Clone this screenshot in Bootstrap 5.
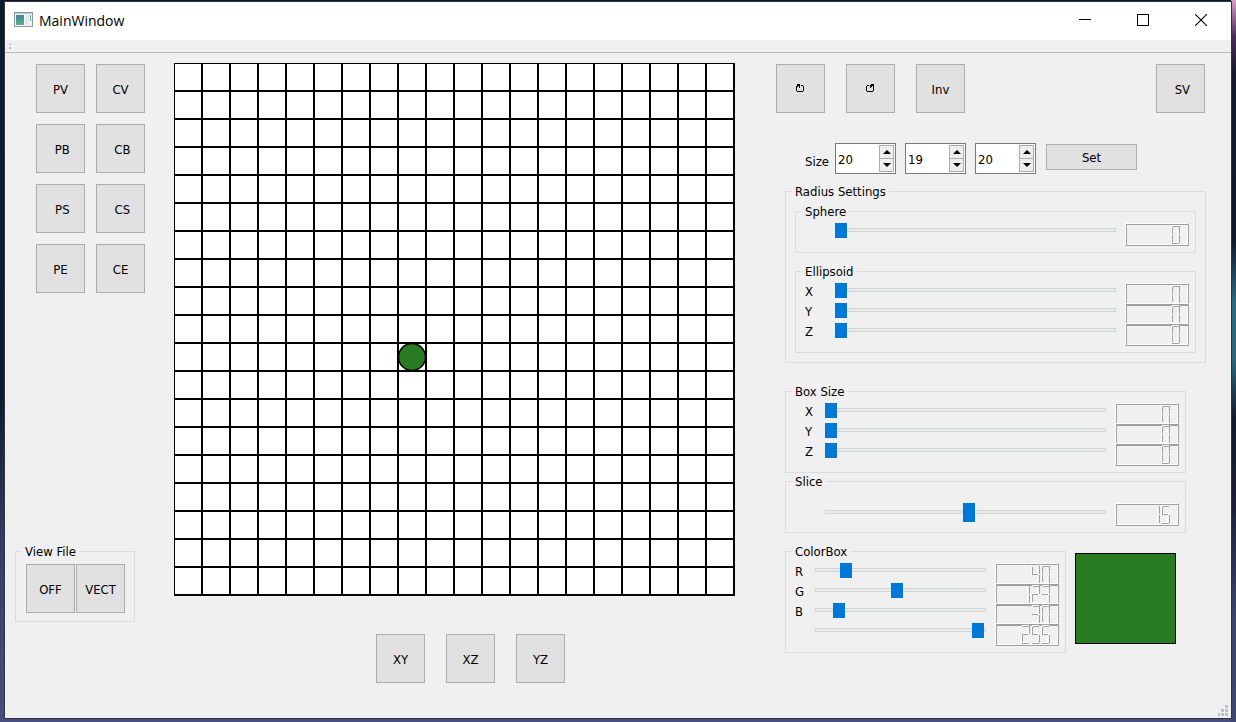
<!DOCTYPE html>
<html lang="en">
<head>
<meta charset="utf-8">
<meta name="viewport" content="width=device-width, initial-scale=1">
<title>MainWindow</title>
<link href="https://cdn.jsdelivr.net/npm/bootstrap@5.3.0/dist/css/bootstrap.min.css" rel="stylesheet">
<style>
:root { --face:#f0f0f0; --edge:#a0a0a0; --accent:#0078d7; --pick:#287b21; }
body {
  font: 13px/17px "DejaVu Sans Condensed", "DejaVu Sans", sans-serif;
  color: #000;
  min-height: 100vh;
  padding: 2px 5px 4px;
  background:
    linear-gradient(#d9a0c8, #4a2f55 5%, #161a2c 10%, #10172a 33%, #2c6a80 42%, #2b6578 50%, #15192d 58%, #1c1f35 70%, #3c436c 85%, #3f4670) right / 5px 100% no-repeat,
    linear-gradient(#0b1a2c, #0e1c30 55%, #333c66 75%, #474f80);
}
.app { background: var(--face); outline: 1px solid #30343f; }
.titlebar { background: #fff; height: 38px; padding-left: 9px; font: 14px/22px "Open Sans", "Noto Sans", sans-serif; }
.appicon { margin-top: 10px; }
.wbtns { margin-right: 1px; }
.wbtn { width: 58px; height: 36px; border: 0; background: none; padding: 0; display: flex; align-items: center; justify-content: center; }
.toolstrip { height: 13px; border-bottom: 1px solid #b9b9b9; padding: 3px 4px; }
.toolstrip svg, .board, .wbtn svg { display: block; }
.workspace { padding: 10px 25px 35px 10px; }
.tools { width: 130px; margin-right: 29px; padding: 1px 0 61px; }
.toolgrid { display: grid; grid-template-columns: 49px 49px; gap: 11px; margin-left: 21px; }
.push { background: #e1e1e1; border: 1px solid #adadad; border-radius: 0; color: #000; font: inherit; padding: 1px 0 0; width: 49px; height: 49px; }
.push:hover { background: #e5f1fb; border-color: var(--accent); }
.push svg { display: block; margin: 0 auto; }
.push-wide { width: 91px; height: 26px; margin: 1px 0 0 1px; padding: 0; }
.files { gap: 1px; }
.views { gap: 21px; margin-top: 38px; padding-left: 32px; }
.panel { margin-left: 41px; padding-top: 1px; }
.actions { gap: 21px; margin-right: 1px; }
.sizes { gap: 9px; margin: 30px 0 9px 29px; }
.sizes > label { width: 21px; padding-top: 10px; white-space: nowrap; }
.spin { width: 61px; height: 31px; border: 1px solid #7a7a7a; background: #fff; padding: 1px; }
.spin input { width: 42px; border: 0; padding: 2px 0 0 1px; outline: 0; appearance: textfield; -moz-appearance: textfield; background: none; }
.spin input::-webkit-inner-spin-button { appearance: none; }
.spin button { flex: 1; width: 15px; padding: 0; border: 1px solid #acacac; background: #eee; display: flex; align-items: center; justify-content: center; }
.spin button + button { border-top: 0; }
.spin svg { display: block; }

fieldset.frame { border: 1px solid #dcdcdc; padding: 3px 6px 6px 9px; }
.frame > legend { float: none; width: auto; font: inherit; margin: 0 0 0 -3px; padding: 0 3px; }
fieldset.frame-outer { padding: 3px 9px 9px; }
fieldset.frame-files { padding: 4px 8px 8px 10px; width: 120px; }
.frame-files > legend { margin-left: -4px; }
.frame-outer .frame + .frame { margin-top: 10px; }
.panes { margin-left: 9px; }
.stack { margin: 20px 20px 0 0; }
.colorrow { margin-top: 10px; }

.dial { display: grid; grid-template-columns: 30px 1fr 64px; height: 23px; margin-bottom: -3px; }
.dial:last-child { margin-bottom: 0; }
.dial-short { grid-template-columns: 20px 1fr 64px; }
.indent { padding-left: 10px; }
.tall-top { padding-top: 10px; }
.dial > label { line-height: 18px; }
.dial input { appearance: none; -webkit-appearance: none; background: none; width: calc(100% - 9px); height: 14px; margin: 0; padding: 0; display: block; }
.dial input::-webkit-slider-runnable-track { height: 4px; background: #e7eaea; border: 1px solid #d6d6d6; }
.dial input::-webkit-slider-thumb { -webkit-appearance: none; width: 12px; height: 15px; margin: -6px 0 0 -1px; background: var(--accent); border: 0; border-radius: 0; }
.dial input.deep { height: 18px; }
.dial input.deep::-webkit-slider-thumb { height: 19px; margin-top: -8px; }
.lcd { display: block; height: 23px; background: var(--face); border: 1px solid; border-color: #fff var(--edge) var(--edge) #fff; box-shadow: inset 1px 1px 0 var(--edge), inset -1px -1px 0 #fff; position: relative; }
.dial + .dial .lcd { box-shadow: inset 1px 2px 0 var(--edge), inset -1px -1px 0 #fff; }
.lcd svg { display: block; width: 62px; height: 21px; }
.swatch { width: 101px; height: 91px; background: var(--pick); border: 1px solid #000; margin: 10px 10px 0 9px; }
.grip { position: absolute; right: 3px; bottom: 2px; }
</style>
</head>
<body class="d-flex">
<div class="app position-relative flex-grow-1 d-flex flex-column">
  <header class="titlebar d-flex align-items-start">
    <svg class="appicon me-1" width="21" height="16" viewBox="0 0 21 16"><rect x=".5" y=".5" width="18" height="14" fill="#f4f6f8" stroke="#8b98a5"/><rect x="1" y="1" width="17" height="1" fill="#b9c4cf"/><defs><linearGradient id="ig" x2="0" y2="1"><stop stop-color="#4a7fa0"/><stop offset="1" stop-color="#5ab183"/></linearGradient></defs><rect x="2" y="3" width="8" height="10" fill="url(#ig)"/><rect x="11" y="3" width="4" height="10" fill="#e3e7ec"/><rect x="16" y="3" width="1" height="6" fill="#55ae83"/></svg>
    <span class="pt-2">MainWindow</span>
    <div class="wbtns ms-auto d-flex">
      <button class="wbtn" aria-label="Minimize"><svg width="12" height="12"><path d="M0 5.500h12" stroke="#000"/></svg></button>
      <button class="wbtn" aria-label="Maximize"><svg width="12" height="12"><rect x=".5" y=".5" width="11" height="11" fill="none" stroke="#000"/></svg></button>
      <button class="wbtn" aria-label="Close"><svg width="12" height="12"><path d="M0 0 12 12M12 0 0 12" stroke="#000" stroke-width="1.100"/></svg></button>
    </div>
  </header>
  <div class="toolstrip"><svg width="3" height="6" fill="#bdbdbd"><path d="M0 1h2v1H0zM0 4h2v2H0zM1 0h1v2H1z"/></svg></div>

  <main class="workspace d-flex flex-grow-1">
    <section class="tools d-flex flex-column justify-content-between flex-shrink-0">
      <div class="toolgrid">
        <button class="push">PV</button><button class="push">CV</button>
        <button class="push">&nbsp;PB</button><button class="push">&nbsp;CB</button>
        <button class="push">&nbsp;PS</button><button class="push">&nbsp;CS</button>
        <button class="push">PE</button><button class="push">CE</button>
      </div>
      <fieldset class="frame frame-files">
        <legend>View File</legend>
        <div class="files d-flex"><button class="push">OFF</button><button class="push">VECT</button></div>
      </fieldset>
    </section>

    <section class="flex-shrink-0">
      <svg class="board" width="561" height="533" role="img" aria-label="Slice grid">
        <defs><pattern id="cell" width="28" height="28" patternUnits="userSpaceOnUse"><path d="M0 0h28v28H0z" fill="#fff"/><path d="M0 0h28v1H1v27H0zM27 1v26H1v1h27V1z" fill="#000"/></pattern></defs>
        <rect width="561" height="533" fill="url(#cell)"/>
        <circle cx="238" cy="294" r="13.500" fill="#287b21" stroke="#000" stroke-width="1.500"/>
      </svg>
      <div class="views d-flex justify-content-center">
        <button class="push">XY</button><button class="push">XZ</button><button class="push">YZ</button>
      </div>
    </section>

    <section class="panel flex-grow-1">
      <div class="actions d-flex">
        <button class="push" aria-label="Rotate clockwise"><svg width="9" height="10" viewBox="0 0 9 10" shape-rendering="crispEdges"><path d="M1 0h3v4H3V2H2v1H1v4H0V2h1zM5 1h2v1h1v5H7V2H5zM1 7h6v1H1z"/></svg></button>
        <button class="push" aria-label="Rotate counterclockwise"><svg width="9" height="10" viewBox="0 0 9 10" shape-rendering="crispEdges"><path d="M5 0h3v7H7V2H6v1H5v1H4V1h1zM1 1h2v1H1v5H0V2h1zM1 7h6v1H1z"/></svg></button>
        <button class="push">Inv</button>
        <button class="push ms-auto">&nbsp;SV</button>
      </div>

      <div class="sizes d-flex align-items-start">
        <label for="sx">Size</label>
        <div class="spin d-flex"><input id="sx" type="number" value="20"><div class="d-flex flex-column"><button aria-label="Increase"><svg width="8" height="4"><path d="M0 4 4 0l4 4z"/></svg></button><button aria-label="Decrease"><svg width="8" height="4"><path d="M0 0h8L4 4z"/></svg></button></div></div>
        <div class="spin d-flex"><input aria-label="Size Y" type="number" value="19"><div class="d-flex flex-column"><button aria-label="Increase"><svg width="8" height="4"><path d="M0 4 4 0l4 4z"/></svg></button><button aria-label="Decrease"><svg width="8" height="4"><path d="M0 0h8L4 4z"/></svg></button></div></div>
        <div class="spin d-flex"><input aria-label="Size Z" type="number" value="20"><div class="d-flex flex-column"><button aria-label="Increase"><svg width="8" height="4"><path d="M0 4 4 0l4 4z"/></svg></button><button aria-label="Decrease"><svg width="8" height="4"><path d="M0 0h8L4 4z"/></svg></button></div></div>
        <button class="push push-wide">Set</button>
      </div>

      <div class="panes">
        <fieldset class="frame frame-outer">
          <legend>Radius Settings</legend>
          <fieldset class="frame">
            <legend>Sphere</legend>
            <div class="dial"><span></span><input type="range" aria-label="Sphere radius" max="99" value="0"><output class="lcd"></output></div>
          </fieldset>
          <fieldset class="frame">
            <legend>Ellipsoid</legend>
            <div class="dial"><label for="ex">X</label><input id="ex" type="range" max="99" value="0"><output class="lcd"></output></div>
            <div class="dial"><label for="ey">Y</label><input id="ey" type="range" max="99" value="0"><output class="lcd"></output></div>
            <div class="dial"><label for="ez">Z</label><input id="ez" type="range" max="99" value="0"><output class="lcd"></output></div>
          </fieldset>
        </fieldset>

        <div class="stack">
          <fieldset class="frame">
            <legend>Box Size</legend>
            <div class="indent">
              <div class="dial dial-short"><label for="bx">X</label><input id="bx" type="range" max="99" value="0"><output class="lcd"></output></div>
              <div class="dial dial-short"><label for="by">Y</label><input id="by" type="range" max="99" value="0"><output class="lcd"></output></div>
              <div class="dial dial-short"><label for="bz">Z</label><input id="bz" type="range" max="99" value="0"><output class="lcd"></output></div>
            </div>
          </fieldset>
          <fieldset class="frame">
            <legend>Slice</legend>
            <div class="indent tall-top">
              <div class="dial dial-short"><span></span><input class="deep" type="range" aria-label="Slice" max="29" value="15"><output class="lcd"></output></div>
            </div>
          </fieldset>
          <div class="colorrow d-flex align-items-start">
            <fieldset class="frame flex-grow-1">
              <legend>ColorBox</legend>
              <div class="dial dial-short"><label for="cr">R</label><input id="cr" type="range" max="255" value="40"><output class="lcd"></output></div>
              <div class="dial dial-short"><label for="cg">G</label><input id="cg" type="range" max="255" value="123"><output class="lcd"></output></div>
              <div class="dial dial-short"><label for="cb">B</label><input id="cb" type="range" max="255" value="30"><output class="lcd"></output></div>
              <div class="dial dial-short"><span></span><input type="range" aria-label="Alpha" max="255" value="255"><output class="lcd"></output></div>
            </fieldset>
            <div class="swatch flex-shrink-0"></div>
          </div>
        </div>
      </div>
    </section>
  </main>
  <svg class="grip" width="10" height="11" fill="#bfbfbf"><path d="M7 0h3v3H7zM7 4h3v3H7zM3 4h3v3H3zM7 8h3v3H7zM3 8h3v3H3zM0 8h2v3H0z"/></svg>
</div>
<script src="https://cdn.jsdelivr.net/npm/bootstrap@5.3.0/dist/js/bootstrap.bundle.min.js"></script>
<script>
// Seven-segment readout: each segment has a light and a dark edge, as [x, y, w, h].
const SEG = {
  a: [[1,0,7,1],[2,1,6,1]],
  b: [[6,2,1,6],[8,1,1,8]],
  c: [[6,11,1,6],[8,10,1,8]],
  d: [[1,17,7,1],[1,18,7,1]],
  e: [[0,10,1,7],[1,10,1,7]],
  f: [[0,1,1,8],[1,2,1,7]],
  g: [[2,8,6,1],[1,9,6,1]]
};
const DIGITS = ['abcdef','bc','abged','abgcd','fgbc','afgcd','afgedc','abc','abcdefg','abcfgd'];
function draw(input) {
  const out = input.nextElementSibling, v = input.value;
  let s = '';
  [...v].reverse().forEach((n, i) => {
    for (const k of DIGITS[n]) SEG[k].forEach((r, j) => {
      s += `<rect x="${45 - 10 * i + r[0]}" y="${1 + r[1]}" width="${r[2]}" height="${r[3]}" fill="${j ? '#a0a0a0' : '#fff'}"/>`;
    });
  });
  out.innerHTML = `<svg role="img" aria-label="${v}">${s}</svg>`;
}
document.querySelectorAll('.dial input').forEach(i => { draw(i); i.addEventListener('input', () => draw(i)); });
document.querySelectorAll('.spin button').forEach(b => b.addEventListener('click', () => {
  const f = b.closest('.spin').querySelector('input');
  b === b.parentNode.firstElementChild ? f.stepUp() : f.stepDown();
}));
</script>
</body>
</html>
